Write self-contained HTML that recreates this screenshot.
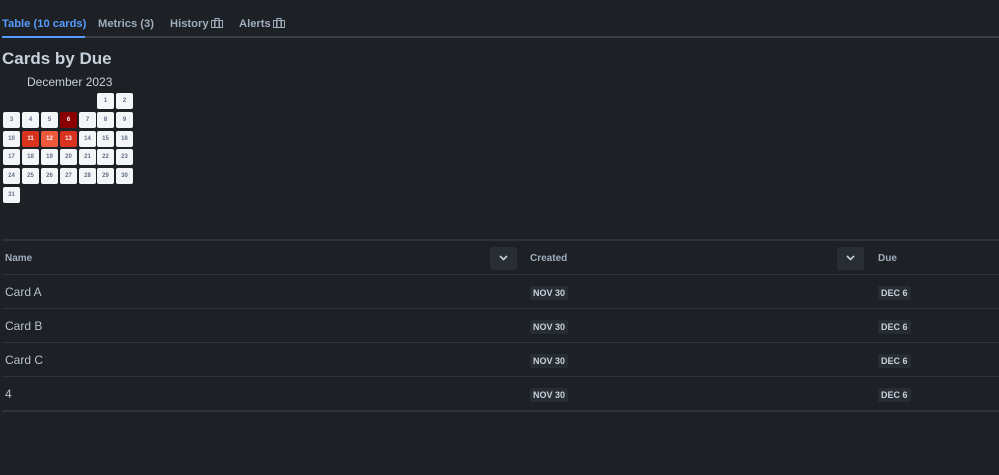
<!DOCTYPE html>
<html><head><style>
body{margin:0;background:#1d2025;font-family:"Liberation Sans",sans-serif;color:#c7d1db;width:999px;height:475px;overflow:hidden;position:relative}
.abs{position:absolute}
.tab{position:absolute;top:18px;font-size:11.2px;font-weight:bold;color:#9fadbc;white-space:nowrap}
.tab svg{vertical-align:-1px;margin-left:2px}
.cell{position:absolute;width:17px;height:16px;background:#f4f5f7;border-radius:2px;font-size:6px;color:#626f86;text-align:center;line-height:16px;font-weight:bold}
.hd{position:absolute;top:253px;font-size:10px;font-weight:bold;color:#9fadbc}
.line{position:absolute;left:2px;right:0;height:2px;background:#2c333a}
.dd{position:absolute;top:247px;width:27px;height:23px;background:#282e33;border-radius:3px}
.dd svg{position:absolute;left:9px;top:8px}
.nm{position:absolute;left:5px;font-size:12px;color:#b6c2cf}
.bd{position:absolute;font-size:9px;font-weight:bold;color:#c7d1db;background:#282d33;border-radius:2px;padding:2px 3px;line-height:10px}
</style></head><body>
<div class="tab" style="left:2px;color:#579dff">Table (10 cards)</div>
<div class="tab" style="left:98px">Metrics (3)</div>
<div class="tab" style="left:170px">History<svg width="12" height="10"><rect x="0.5" y="2.5" width="11" height="7" fill="none" stroke="#9fadbc"/><rect x="4" y="0.5" width="4" height="2" fill="none" stroke="#9fadbc"/><rect x="3" y="3" width="1.5" height="6" fill="#9fadbc"/><rect x="7.5" y="3" width="1.5" height="6" fill="#9fadbc"/></svg></div>
<div class="tab" style="left:239px">Alerts<svg width="12" height="10"><rect x="0.5" y="2.5" width="11" height="7" fill="none" stroke="#9fadbc"/><rect x="4" y="0.5" width="4" height="2" fill="none" stroke="#9fadbc"/><rect x="3" y="3" width="1.5" height="6" fill="#9fadbc"/><rect x="7.5" y="3" width="1.5" height="6" fill="#9fadbc"/></svg></div>
<div class="abs" style="left:2px;top:36px;width:997px;height:2px;background:#3b4046"></div>
<div class="abs" style="left:2px;top:36px;width:83px;height:2px;background:#579dff"></div>
<div class="abs" style="left:2px;top:49px;font-size:17px;font-weight:bold;color:#c7d1db">Cards by Due</div>
<div class="abs" style="left:27px;top:75px;font-size:12px;color:#c7d1db">December 2023</div>
<div class="line" style="top:239px"></div>
<div class="hd" style="left:5px">Name</div>
<div class="dd" style="left:490px"><svg width="9" height="6"><path d="M1 1l3.5 3.5L8 1" stroke="#c7d1db" stroke-width="1.6" fill="none"/></svg></div>
<div class="hd" style="left:530px">Created</div>
<div class="dd" style="left:837px"><svg width="9" height="6"><path d="M1 1l3.5 3.5L8 1" stroke="#c7d1db" stroke-width="1.6" fill="none"/></svg></div>
<div class="hd" style="left:878px">Due</div>
<div class="line" style="top:274px;height:1px"></div>
<div class="nm" style="top:285px">Card A</div><div class="bd" style="left:530px;top:286px">NOV 30</div><div class="bd" style="left:878px;top:286px">DEC 6</div>
<div class="line" style="top:308px;height:1px"></div>
<div class="nm" style="top:319px">Card B</div><div class="bd" style="left:530px;top:320px">NOV 30</div><div class="bd" style="left:878px;top:320px">DEC 6</div>
<div class="line" style="top:342px;height:1px"></div>
<div class="nm" style="top:353px">Card C</div><div class="bd" style="left:530px;top:354px">NOV 30</div><div class="bd" style="left:878px;top:354px">DEC 6</div>
<div class="line" style="top:376px;height:1px"></div>
<div class="nm" style="top:387px">4</div><div class="bd" style="left:530px;top:388px">NOV 30</div><div class="bd" style="left:878px;top:388px">DEC 6</div>
<div class="line" style="top:410px"></div>
<div class="abs" style="left:3px;top:93px">
<div class="cell" style="left:94px;top:0">1</div><div class="cell" style="left:113px;top:0">2</div>
<div class="cell" style="left:0;top:19px">3</div><div class="cell" style="left:19px;top:19px">4</div><div class="cell" style="left:38px;top:19px">5</div><div class="cell" style="left:57px;top:19px;background:#8b0000;color:#fff">6</div><div class="cell" style="left:76px;top:19px">7</div><div class="cell" style="left:94px;top:19px">8</div><div class="cell" style="left:113px;top:19px">9</div>
<div class="cell" style="left:0;top:38px">10</div><div class="cell" style="left:19px;top:38px;background:#d9321f;color:#fff">11</div><div class="cell" style="left:38px;top:38px;background:#f05a3c;color:#fff">12</div><div class="cell" style="left:57px;top:38px;background:#d9321f;color:#fff">13</div><div class="cell" style="left:76px;top:38px">14</div><div class="cell" style="left:94px;top:38px">15</div><div class="cell" style="left:113px;top:38px">16</div>
<div class="cell" style="left:0;top:56px">17</div><div class="cell" style="left:19px;top:56px">18</div><div class="cell" style="left:38px;top:56px">19</div><div class="cell" style="left:57px;top:56px">20</div><div class="cell" style="left:76px;top:56px">21</div><div class="cell" style="left:94px;top:56px">22</div><div class="cell" style="left:113px;top:56px">23</div>
<div class="cell" style="left:0;top:75px">24</div><div class="cell" style="left:19px;top:75px">25</div><div class="cell" style="left:38px;top:75px">26</div><div class="cell" style="left:57px;top:75px">27</div><div class="cell" style="left:76px;top:75px">28</div><div class="cell" style="left:94px;top:75px">29</div><div class="cell" style="left:113px;top:75px">30</div>
<div class="cell" style="left:0;top:94px">31</div>
</div>
</body></html>
